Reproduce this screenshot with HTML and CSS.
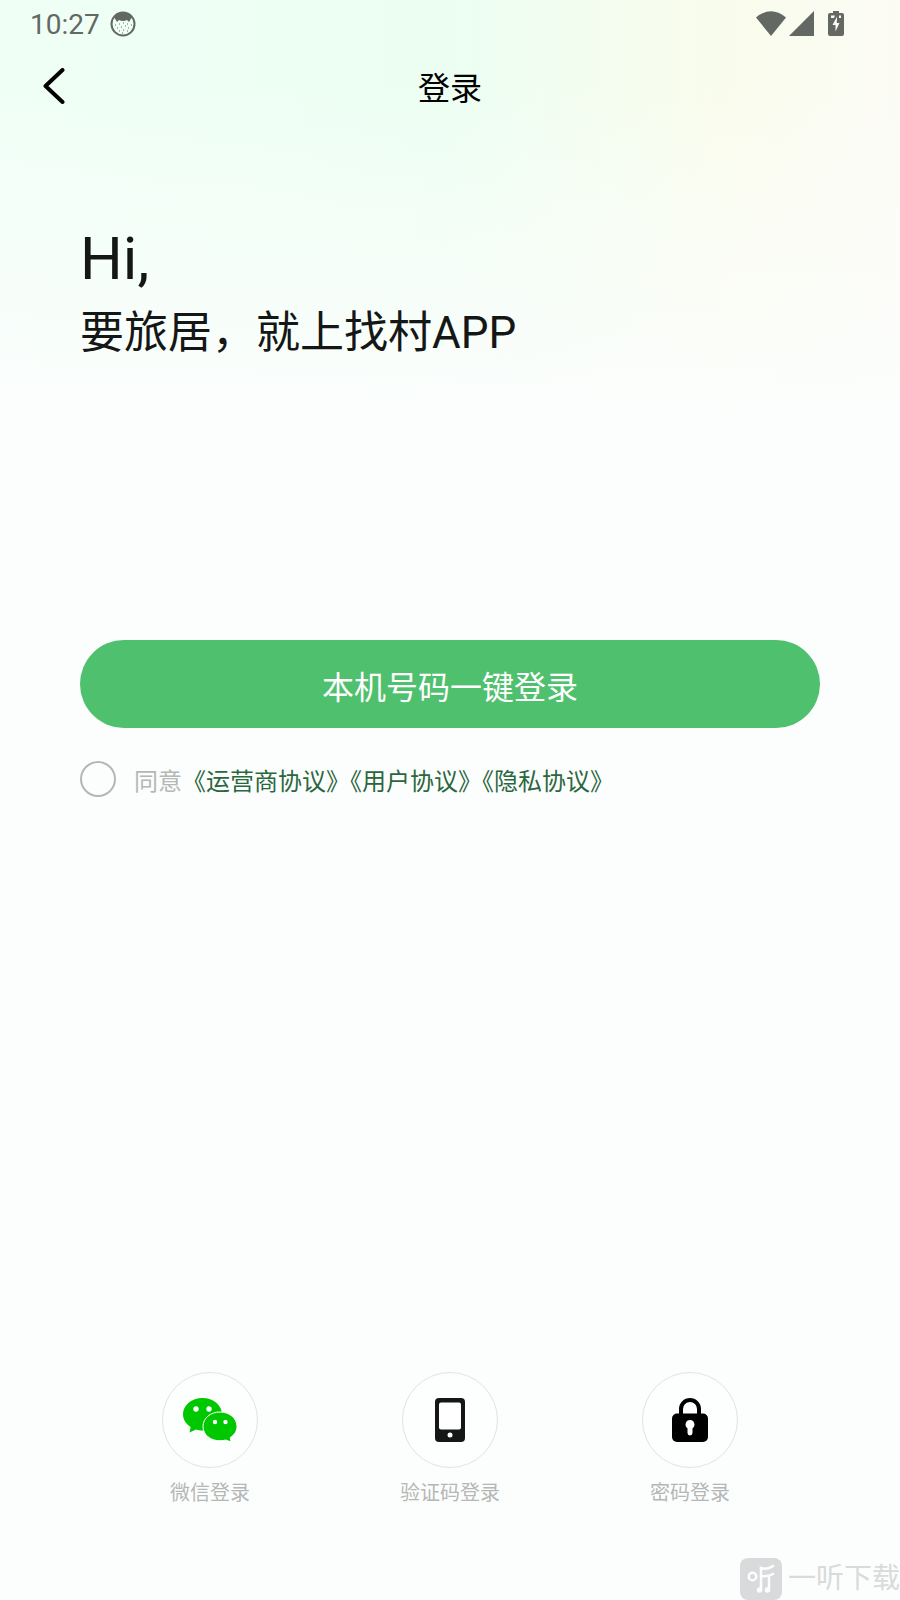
FILE: index.html
```html
<!DOCTYPE html>
<html lang="zh-Hans">
<head>
<meta charset="UTF-8" />
<meta name="viewport" content="width=device-width, initial-scale=1" />
<title>登录</title>
<link rel="stylesheet" href="styles.css">
</head>
<body>

<div class="status-bar">
  <span class="time">10:27</span>
  <svg class="face" width="26" height="26" viewBox="0 0 26 26">
    <circle cx="13" cy="13" r="11.5" fill="none" stroke="currentColor" stroke-width="2"/>
    <path d="M4 6C8 0 18 0 22 6L19 11L17 9Q13 11 9 9L7 11Z" fill="currentColor"/>
    <path d="M5 14h1M9 13h1M13 12h1M17 13h1M21 14h1M7 17h1M11 16h1M15 15h1M18 17h1M9 20h1M13 19h1M17 20h1M12 22h1" stroke="currentColor" stroke-width="1"/>
  </svg>
  <div class="signals">
    <svg width="30" height="26" viewBox="0 0 30 26"><path d="M0 6.5Q15 -6 30 6.5L15 25Z" fill="currentColor"/></svg>
    <svg width="25" height="26" viewBox="0 0 25 26"><path d="M25 0V25H0Z" fill="currentColor"/></svg>
    <svg class="battery" width="16" height="26" viewBox="0 0 16 26">
      <path d="M5 0h6v2h3q2 0 2 2v19q0 2-2 2H2q-2 0-2-2V4q0-2 2-2h3z" fill="currentColor"/>
      <path d="M9 5.500L4.500 14H7.500V20.500L11.500 12H8.800ZM3 4.500h4l-1 2.500H3zM11 4.500h2V7h-2z" fill="#fafbf2"/>
    </svg>
  </div>
</div>

<header class="nav">
  <button class="back" type="button" aria-label="返回">
    <svg width="22" height="36" viewBox="0 0 22 36"><path d="M19.500 2L2.500 18L19.500 34" fill="none" stroke="#000" stroke-width="4" stroke-linecap="round" stroke-linejoin="round"/></svg>
  </button>
  <h1>登录</h1>
</header>

<main>
  <div class="hello">
    <p class="hi">Hi,</p>
    <p class="slogan">要旅居，就上找村APP</p>
  </div>

  <button class="login-btn" type="button">本机号码一键登录</button>

  <div class="agree">
    <input type="checkbox" id="agree" />
    <label for="agree">同意</label>
    <div class="links"><a href="#">《运营商协议》</a><a href="#">《用户协议》</a><a href="#">《隐私协议》</a></div>
  </div>
</main>

<footer class="other">
  <button class="way" type="button">
    <span class="circle">
      <svg width="54" height="44" viewBox="0 0 54 44">
        <path d="M19.500 0C8.500 0 0 7.200 0 16.300C0 21.500 3 26 7.700 29L6.500 34.500L13 31.500C15 32.200 17.500 32.600 19.500 32.600C30.500 32.600 39 25.300 39 16.300S30.500 0 19.500 0Z" fill="#00c800"/>
        <path d="M37 14C27.500 14 20 20.200 20 28.500S27.500 42.800 37 42.800C39 42.800 41 42.500 42.800 42L48 44L47.300 39.500C51.500 37 54 33 54 28.500C54 20.200 46.500 14 37 14Z" fill="#00c800" stroke="#fff" stroke-width="1"/>
        <g fill="#fff"><circle cx="13" cy="11" r="2.700"/><circle cx="26" cy="11" r="2.700"/><circle cx="32" cy="24" r="2.200"/><circle cx="42.500" cy="24" r="2.200"/></g>
      </svg>
    </span>
    <span>微信登录</span>
  </button>
  <button class="way" type="button">
    <span class="circle">
      <svg width="30" height="44" viewBox="0 0 30 44">
        <rect width="30" height="44" rx="4" fill="#141716"/>
        <rect x="4" y="4.500" width="22" height="27" rx="2" fill="#fff"/>
        <circle cx="15" cy="37" r="2.500" fill="#fff"/>
      </svg>
    </span>
    <span>验证码登录</span>
  </button>
  <button class="way" type="button">
    <span class="circle">
      <svg width="36" height="44" viewBox="0 0 36 44">
        <path d="M9 17V11a9 9 0 0 1 18 0V17" fill="none" stroke="#000" stroke-width="4"/>
        <rect y="15.500" width="36" height="28.500" rx="5" fill="#000"/>
        <path d="M18 22a4.500 4.500 0 0 1 2.500 8.200V35a2.500 2.500 0 0 1-5 0V30.200A4.500 4.500 0 0 1 18 22Z" fill="#fff"/>
      </svg>
    </span>
    <span>密码登录</span>
  </button>
</footer>

<div class="watermark">
  <svg width="42" height="42" viewBox="0 0 42 42">
    <rect width="42" height="42" rx="8" fill="#d9dadb"/>
    <g fill="none" stroke="#fcfefd" stroke-width="2.500" stroke-linecap="round">
      <circle cx="12.500" cy="18.500" r="3.800"/>
      <path d="M21 31V10Q28 12 33 8M21 18Q28 19 33 16M29 18V31"/>
    </g>
    <g fill="#fcfefd"><circle cx="19.500" cy="32" r="2.700"/><circle cx="27.500" cy="32" r="2.700"/></g>
  </svg>
  <span>一听下载</span>
</div>

</body>
</html>
```
FILE: styles.css
```css
* {
  box-sizing: border-box;
}
body {
  margin: 0;
  min-height: 100vh;
  display: flex;
  flex-direction: column;
  font-family: Roboto, "Noto Sans CJK SC", sans-serif;
  color: #141716;
  background:
    linear-gradient(to bottom, rgba(252, 254, 253, 0) 80px, #fcfefd 420px),
    linear-gradient(to right, #effff6 0%, #ecfef2 50%, #f9fcec 80%, #fbfbf4 100%);
}
h1, p {
  margin: 0;
  font-weight: 400;
}
button {
  padding: 0;
  border: none;
  background: none;
  font-family: inherit;
  cursor: pointer;
}
svg {
  display: block;
}
.status-bar {
  display: flex;
  align-items: center;
  gap: 10px;
  height: 48px;
  padding: 0 56px 0 30px;
  color: #636863;
}
.time {
  font-size: 28px;
}
.signals {
  display: flex;
  gap: 3px;
  margin-left: auto;
}
.battery {
  margin-left: 11px;
}
.nav {
  display: grid;
  grid-template-columns: 80px 1fr 80px;
  align-items: center;
  height: 76px;
  color: #000;
}
.back {
  display: flex;
  align-items: center;
  height: 76px;
  padding-left: 43px;
}
.nav h1 {
  font-size: 32px;
  text-align: center;
}
main {
  padding: 100px 80px 0;
}
.hi {
  font-size: 60px;
  line-height: 70px;
}
.slogan {
  font-size: 44px;
  line-height: 78px;
}
.login-btn {
  display: block;
  width: 100%;
  height: 88px;
  margin-top: 268px;
  padding-top: 2px;
  border-radius: 44px;
  background: #4fc06d;
  color: #fff;
  font-size: 32px;
}
.agree {
  display: flex;
  align-items: center;
  margin-top: 33px;
  font-size: 24px;
}
.agree input {
  appearance: none;
  width: 36px;
  height: 36px;
  margin: 0 18px 0 0;
  border: 2px solid #b5b7b6;
  border-radius: 50%;
}
.agree input:checked {
  background: #4fc06d;
}
.agree label {
  color: #b5b7b6;
}
.links a {
  color: #2b673e;
  text-decoration: none;
}
.other {
  display: grid;
  grid-template-columns: repeat(3, 1fr);
  margin-top: auto;
  padding: 0 90px 91px;
}
.way {
  display: flex;
  flex-direction: column;
  align-items: center;
  gap: 9px;
  color: #b5b7b6;
  font-size: 20px;
  line-height: 32px;
}
.circle {
  display: flex;
  align-items: center;
  justify-content: center;
  width: 96px;
  height: 96px;
  border: 1px solid #dce6df;
  border-radius: 50%;
  background: #fdfefe;
}
/* sits over the page corner */
.watermark {
  position: absolute;
  right: 0;
  bottom: 0;
  display: flex;
  align-items: center;
  gap: 6px;
  color: #d9dadb;
  font-size: 28px;
  line-height: 42px;
}
```
